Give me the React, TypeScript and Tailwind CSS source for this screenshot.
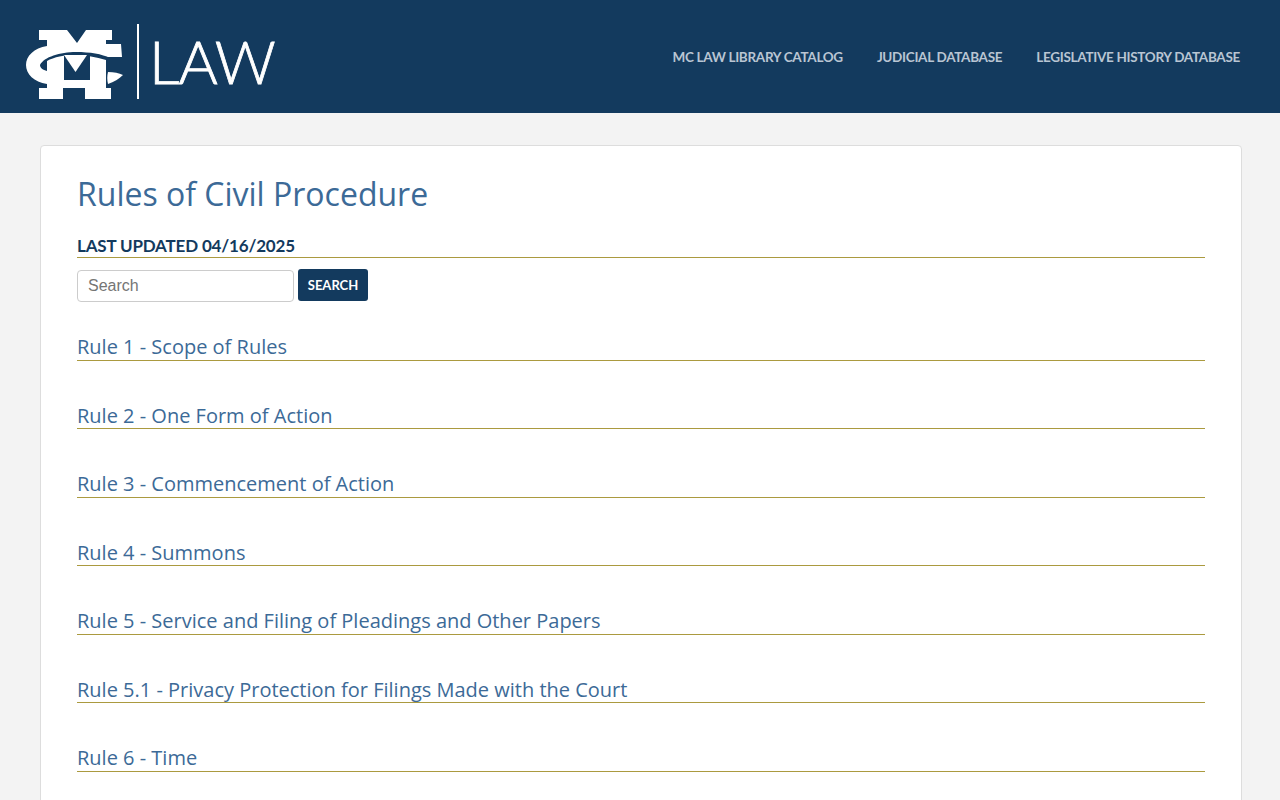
import React from 'react';

const rules = [
    'Rule 1 - Scope of Rules',
    'Rule 2 - One Form of Action',
    'Rule 3 - Commencement of Action',
    'Rule 4 - Summons',
    'Rule 5 - Service and Filing of Pleadings and Other Papers',
    'Rule 5.1 - Privacy Protection for Filings Made with the Court',
    'Rule 6 - Time',
];

const navLinks = ['MC Law Library Catalog', 'Judicial Database', 'Legislative History Database'];

function Crest() {
    return (
        <svg width="98" height="76" viewBox="26 24 98 76" className="block">
            <path
                d="M39 30H67L77 43L86 30H112V40H106V44H121L122 57H106V88H111V99H85V88H63V99H39V88H47V84C34 82 26 74 26 65C26 56 34 48 47 46V40H39Z"
                fill="#fff"
            />
            <path d="M108 72C114 72 119 73 123 75C119 79 114 82 108 84C107 80 107 76 108 72Z" fill="#fff" />
            <path
                d="M40 65C44 57 60 52 76 52C90 52 102 54 110 58L106 60C96 57 86 55 76 55C64 55 54 57 47 61V71C43 70 40 68 40 65Z"
                fill="#133a5e"
            />
            <path d="M64 55H90V80H64Z" fill="#133a5e" />
            <path d="M64 55H87L75.5 72Z" fill="#fff" />
        </svg>
    );
}

export default function App() {
    return (
        <div className="min-h-screen bg-[#f3f3f3] font-['Open_Sans',sans-serif]">
            <header className="h-[113px] bg-[#133a5e] flex items-center justify-between pl-[26px] pr-[40px]">
                <div className="flex items-start pt-[11px]">
                    <Crest />
                    <div className="ml-[13px] w-[2px] h-[75px] bg-white" />
                    <div className="ml-[10px] font-['Lato',sans-serif] font-light text-[60px] leading-[75px] tracking-[-0.8px] text-white [-webkit-text-stroke:0.8px_white]">
                        LAW
                    </div>
                </div>
                <nav className="flex gap-[34px] pt-[2px] font-['Lato',sans-serif] text-[13.5px] tracking-[-0.3px] font-bold uppercase text-[#b9c5d3]">
                    {navLinks.map((link) => (
                        <a key={link} href="#">{link}</a>
                    ))}
                </nav>
            </header>

            <main className="pl-[40px] pr-[38px] pt-[32px]">
                <div className="bg-white border border-[#dddddd] rounded-[4px] px-[36px] pt-[24px] pb-[40px]">
                    <h1 className="text-[32px] leading-[48px] text-[#3c6a97]">Rules of Civil Procedure</h1>
                    <h2 className="mt-[17px] border-b border-[#ab9a3f] font-['Lato',sans-serif] text-[17px] tracking-[-0.17px] leading-[22px] font-bold uppercase text-[#133a5e]">
                        Last Updated 04/16/2025
                    </h2>
                    <form className="mt-[11px] flex items-start gap-[4px]">
                        <input
                            placeholder="Search"
                            className="w-[217px] h-[32px] mt-[1px] px-[10px] border border-[#cccccc] rounded-[4px] font-['Liberation_Sans',sans-serif] text-[16px] placeholder:text-[#757575]"
                        />
                        <button className="h-[32px] w-[70px] pt-[2px] bg-[#133a5e] rounded-[3px] font-['Lato',sans-serif] text-[13px] font-bold text-white">
                            SEARCH
                        </button>
                    </form>
                    <ul className="mt-[31px] flex flex-col gap-[41px]">
                        {rules.map((rule) => (
                            <li key={rule} className="border-b border-[#ab9a3f] h-[27.5px]">
                                <a href="#" className="text-[20px] leading-[28px] text-[#3c6a97]">{rule}</a>
                            </li>
                        ))}
                    </ul>
                </div>
            </main>
        </div>
    );
}
